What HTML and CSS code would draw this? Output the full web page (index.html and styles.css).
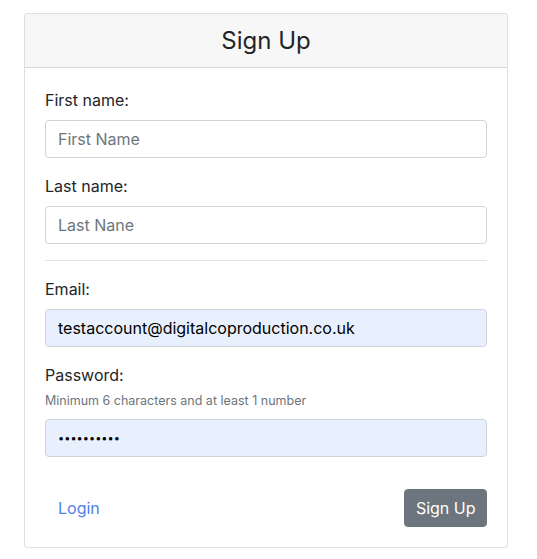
FILE: index.html
```html
<!DOCTYPE html>
<html lang="en">
<head>
<meta charset="utf-8">
<title>Sign Up</title>
<link rel="stylesheet" href="styles.css">
</head>
<body>
<div class="page">
  <div class="card">
    <div class="card-header">
      <h4 class="title">Sign Up</h4>
    </div>
    <form class="card-body">
      <div class="group">
        <label class="label" for="fn">First name:</label>
        <input class="control" id="fn" type="text" placeholder="First Name">
      </div>
      <div class="group">
        <label class="label" for="ln">Last name:</label>
        <input class="control" id="ln" type="text" placeholder="Last Nane">
      </div>
      <hr class="divider">
      <div class="group">
        <label class="label" for="em">Email:</label>
        <input class="control filled" id="em" type="email" value="testaccount@digitalcoproduction.co.uk">
      </div>
      <div class="group">
        <label class="label" for="pw">Password:</label>
        <small class="hint">Minimum 6 characters and at least 1 number</small>
        <input class="control filled secret" id="pw" type="password" value="password12">
      </div>
      <div class="actions">
        <a class="link-btn" href="#">Login</a>
        <button class="btn-secondary" type="button">Sign Up</button>
      </div>
    </form>
  </div>
</div>
</body>
</html>
```

FILE: styles.css
```css
* { box-sizing: border-box; }
html, body { margin: 0; padding: 0; background: #fff; }
body {
  font-family: Inter, "Noto Sans", "Liberation Sans", sans-serif;
  font-size: 16px;
  line-height: 1.5;
  color: #212529;
}
.page { padding: 13px 30px 12px 24px; }
.card {
  width: 484px;
  border: 1px solid rgba(0,0,0,.125);
  border-radius: 4px;
  background: #fff;
}
.card-header {
  background: #f7f7f7;
  border-bottom: 1px solid rgba(0,0,0,.125);
  border-radius: 4px 4px 0 0;
  padding: 12px 20px;
  text-align: center;
}
.title {
  margin: 0;
  font-size: 24px;
  font-weight: 400;
  line-height: 29px;
  color: #212529;
}
.card-body { display: block; padding: 20px; margin: 0; }
.group { margin-bottom: 16px; }
.label { display: block; margin-bottom: 8px; line-height: 24px; }
.hint {
  display: block;
  font-size: 12.5px;
  line-height: 19px;
  color: #6c757d;
  margin: -4px 0 9px;
}
.control {
  display: block;
  width: 100%;
  height: 38px;
  padding: 6px 12px;
  font: inherit;
  font-size: 16px;
  color: #495057;
  background: #fff;
  border: 1px solid #ced4da;
  border-radius: 4px;
  outline: none;
}
.control::placeholder { color: #6c757d; opacity: 1; }
.control.filled { background: #e8f0fe; color: #000; }
.control.secret { font-size: 11px; letter-spacing: 0; }
.divider {
  margin: 16px 0;
  border: 0;
  border-top: 1px solid rgba(0,0,0,.1);
  height: 0;
}
.actions {
  display: flex;
  justify-content: space-between;
  align-items: center;
  margin-top: 32px;
}
.link-btn {
  display: inline-block;
  padding: 6px 12px;
  border: 1px solid transparent;
  color: #4f80e8;
  text-decoration: none;
  line-height: 24px;
}
.btn-secondary {
  height: 38px;
  padding: 6px 10.5px;
  font: inherit;
  font-size: 16px;
  line-height: 24px;
  color: #fff;
  background: #6c757d;
  border: 1px solid #6c757d;
  border-radius: 4px;
}
```
